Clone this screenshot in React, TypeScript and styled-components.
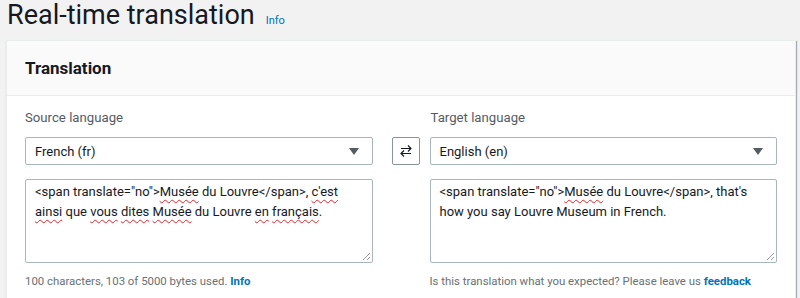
import React from 'react'
import styled, { createGlobalStyle } from 'styled-components'

const GlobalStyle = createGlobalStyle`
  html, body {
    margin: 0;
    padding: 0;
    background: #f2f2f2;
  }
  body {
    font-family: Roboto, "Liberation Sans", Arial, sans-serif;
    color: #16191f;
  }
`

const Page = styled.div`
  padding: 0 4px 0 6px;
`

const TitleBar = styled.div`
  height: 40px;
  display: flex;
  align-items: baseline;
  gap: 11px;
  padding-left: 1px;
`

const Title = styled.h1`
  margin: 0;
  font-size: 27px;
  font-weight: 400;
  line-height: 31px;
  color: #16191f;
`

const InfoLink = styled.a`
  font-size: 11px;
  color: #0073bb;
  text-decoration: none;
`

const Card = styled.section`
  background: #fff;
  border: 1px solid #eaeded;
  box-shadow: 1px 1px 1px 0 rgba(0, 28, 36, 0.3), 0 1px 1px 0 rgba(0, 28, 36, 0.15);
  min-height: 300px;
`

const CardHeader = styled.div`
  height: 54px;
  display: flex;
  align-items: center;
  padding: 0 18px;
  background: #fafafa;
  border-bottom: 1px solid #eaeded;
`

const CardTitle = styled.h2`
  margin: 0;
  font-size: 17px;
  font-weight: 700;
  color: #16191f;
`

const CardBody = styled.div`
  display: grid;
  grid-template-columns: 1fr 57px 1fr;
  grid-template-rows: auto auto auto auto;
  padding: 11px 18px 20px;
`

const Label = styled.div<{ $col: number }>`
  grid-column: ${({ $col }) => $col};
  grid-row: 1;
  font-size: 13.2px;
  line-height: 22px;
  color: #545b64;
  margin-left: ${({ $col }) => ($col === 3 ? 1 : 0)}px;
`

const Select = styled.div<{ $col: number }>`
  grid-column: ${({ $col }) => $col};
  grid-row: 2;
  margin-top: 8px;
  height: 28px;
  box-sizing: border-box;
  border: 1px solid #aab7b8;
  border-radius: 2px;
  background: #fff;
  display: flex;
  align-items: center;
  justify-content: space-between;
  padding: 0 13px 0 9px;
  font-size: 13px;
  color: #16191f;
`

const Caret = styled.span`
  width: 0;
  height: 0;
  border-left: 5px solid transparent;
  border-right: 5px solid transparent;
  border-top: 7px solid #545b64;
`

const SwapButton = styled.button`
  grid-column: 2;
  grid-row: 2;
  margin-top: 8px;
  justify-self: end;
  margin-right: 10px;
  width: 28px;
  height: 28px;
  box-sizing: border-box;
  padding: 0;
  border: 1px solid #879596;
  border-radius: 2px;
  background: #fff;
  display: flex;
  align-items: center;
  justify-content: center;
`

const TextBox = styled.div<{ $col: number }>`
  grid-column: ${({ $col }) => $col};
  grid-row: 3;
  margin-top: 14px;
  position: relative;
  height: 84px;
  box-sizing: border-box;
  border: 1px solid #aab7b8;
  border-radius: 2px;
  background: #fff;
  padding: 2px 10px 0 9px;
  font-size: 13px;
  line-height: 20px;
  color: #16191f;
`

const Misspelled = styled.span`
  text-decoration: underline wavy #e0252b;
  text-decoration-thickness: 1px;
  text-underline-offset: 3px;
`

const Grip = styled.svg`
  position: absolute;
  right: 1px;
  bottom: 1px;
`

const Hint = styled.div<{ $col: number }>`
  grid-column: ${({ $col }) => $col};
  grid-row: 4;
  margin-top: 9px;
  font-size: 11.4px;
  line-height: 18px;
  color: #687078;
`

const HintLink = styled.a`
  color: #0073bb;
  font-weight: 700;
  text-decoration: none;
`

const SwapIcon = () => (
  <svg width="14" height="14" viewBox="0 0 14 14" fill="none" stroke="#16191f" strokeWidth="1.2">
    <path d="M2 4.5h10M9 1.5l3 3-3 3" />
    <path d="M12 9.5H2M5 6.5l-3 3 3 3" />
  </svg>
)

const ResizeGrip = () => (
  <Grip width="10" height="10" viewBox="0 0 10 10" stroke="#9a9a9a" strokeWidth="1">
    <path d="M9 2L2 9M9 6L6 9" />
  </Grip>
)

export default function App() {
  return (
    <>
      <GlobalStyle />
      <Page>
        <TitleBar>
          <Title>Real-time translation</Title>
          <InfoLink href="#">Info</InfoLink>
        </TitleBar>
        <Card>
          <CardHeader>
            <CardTitle>Translation</CardTitle>
          </CardHeader>
          <CardBody>
            <Label $col={1}>Source language</Label>
            <Label $col={3}>Target language</Label>

            <Select $col={1}>
              French (fr)
              <Caret />
            </Select>
            <SwapButton aria-label="Swap languages">
              <SwapIcon />
            </SwapButton>
            <Select $col={3}>
              English (en)
              <Caret />
            </Select>

            <TextBox $col={1}>
              &lt;span translate="no"&gt;<Misspelled>Musée</Misspelled> du Louvre&lt;/span&gt;,{' '}
              <Misspelled>c'est</Misspelled> <Misspelled>ainsi</Misspelled> que{' '}
              <Misspelled>vous</Misspelled> <Misspelled>dites</Misspelled>{' '}
              <Misspelled>Musée</Misspelled> du Louvre <Misspelled>en</Misspelled>{' '}
              <Misspelled>français</Misspelled>.
              <ResizeGrip />
            </TextBox>
            <TextBox $col={3}>
              &lt;span translate="no"&gt;<Misspelled>Musée</Misspelled> du Louvre&lt;/span&gt;, that's
              <br />
              how you say Louvre Museum in French.
              <ResizeGrip />
            </TextBox>

            <Hint $col={1}>
              100 characters, 103 of 5000 bytes used. <HintLink href="#">Info</HintLink>
            </Hint>
            <Hint $col={3}>
              Is this translation what you expected? Please leave us <HintLink href="#">feedback</HintLink>
            </Hint>
          </CardBody>
        </Card>
      </Page>
    </>
  )
}
